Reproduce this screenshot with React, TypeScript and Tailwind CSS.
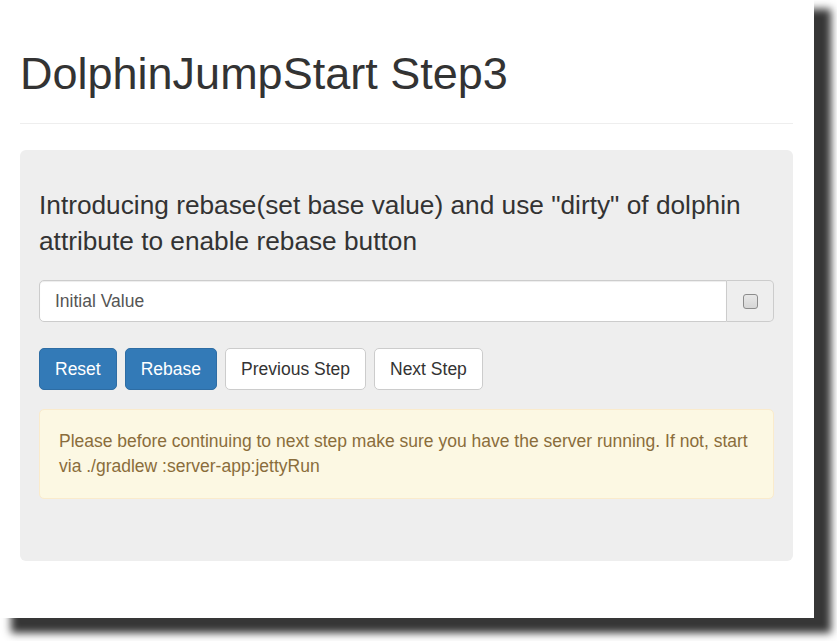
const font = { fontFamily: '"Liberation Sans", Arial, Helvetica, sans-serif' };

const buttons = [
  { label: "Reset", primary: true },
  { label: "Rebase", primary: true },
  { label: "Previous Step", primary: false },
  { label: "Next Step", primary: false },
];

export default function App() {
  return (
    <div className="w-[837px] h-[641px] bg-white overflow-hidden" style={font}>
      <div className="w-[814px] h-[618px] bg-white shadow-[14px_12px_8px_3px_#363636] text-[#333]">
        <div className="pl-[20px] pr-[21px]">
          <div className="pb-[24px] border-b border-[#eeeeee]">
            <h1 className="pt-[49px] text-[45px] leading-[49.5px] font-normal text-[#333]">
              DolphinJumpStart Step3
            </h1>
          </div>

          <div className="mt-[26px] bg-[#eeeeee] rounded-[6px] px-[19px] pt-[37px] pb-[62px]">
            <p className="text-[26.25px] leading-[36.75px] font-light text-[#333]">
              Introducing rebase(set base value) and use "dirty" of dolphin attribute to enable rebase button
            </p>

            <div className="mt-[20px] flex h-[42px]">
              <div className="flex-1 flex items-center bg-white border border-[#cccccc] rounded-l-[5px] px-[15px] shadow-[inset_0_1px_1px_rgba(0,0,0,0.075)] text-[17.5px] text-[#555]">
                Initial Value
              </div>
              <div className="w-[47px] flex items-center justify-center bg-[#eeeeee] border border-l-0 border-[#cccccc] rounded-r-[5px]">
                <div className="w-[15px] h-[15px] rounded-[3px] border border-[#8c8c8c] bg-gradient-to-b from-[#e8e8e8] to-[#d6d6d6]" />
              </div>
            </div>

            <div className="mt-[26px] flex gap-[8px]">
              {buttons.map((b) => (
                <button
                  key={b.label}
                  className={
                    b.primary
                      ? "h-[42px] px-[15px] rounded-[5px] border border-[#2e6da4] bg-[#337ab7] text-white text-[17.5px]"
                      : "h-[42px] px-[15px] rounded-[5px] border border-[#cccccc] bg-white text-[#333] text-[17.5px]"
                  }
                >
                  {b.label}
                </button>
              ))}
            </div>

            <div className="mt-[19px] bg-[#fcf8e3] border border-[#faebcc] rounded-[5px] p-[19px] text-[17.5px] leading-[25px] text-[#8a6d3b]">
              Please before continuing to next step make sure you have the server running. If not, start via ./gradlew :server-app:jettyRun
            </div>
          </div>
        </div>
      </div>
    </div>
  );
}
